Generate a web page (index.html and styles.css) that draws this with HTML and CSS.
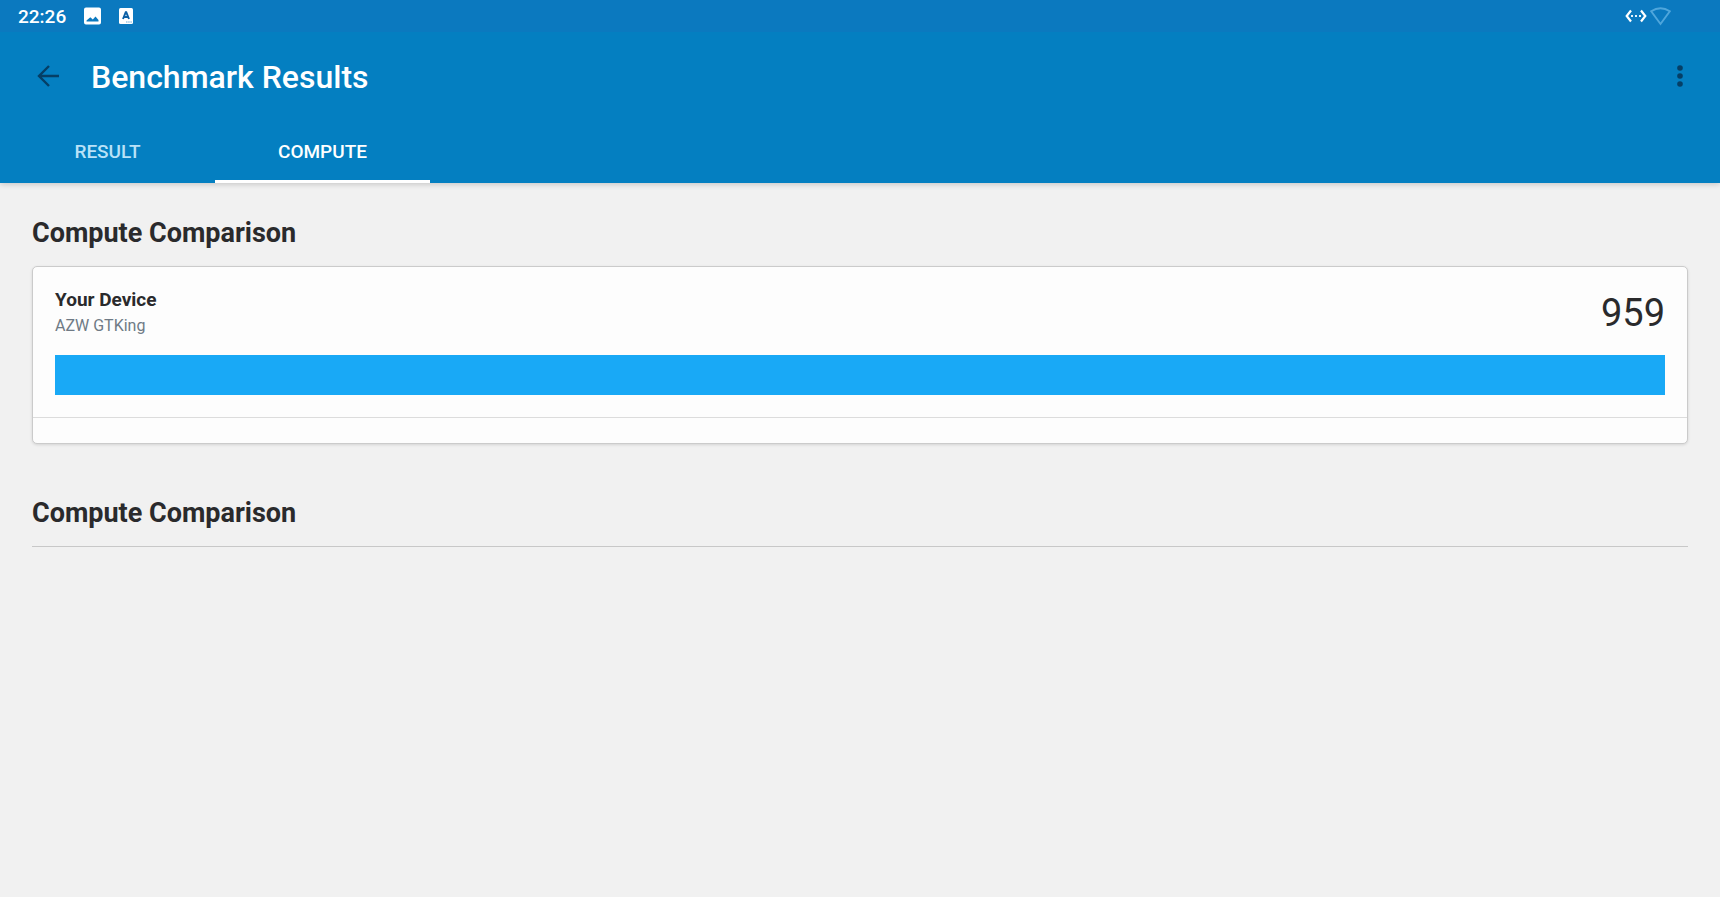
FILE: index.html
```html
<!DOCTYPE html>
<html lang="en">
<head>
  <meta charset="UTF-8" />
  <meta name="viewport" content="width=device-width, initial-scale=1" />
  <title>Benchmark Results</title>
  <link rel="stylesheet" href="styles.css">
</head>
<body>

  <header class="app-header">
    <div class="status-bar">
      <span class="clock">22:26</span>
      <svg class="status-picture" width="17" height="18" viewBox="0 0 17 18">
        <path fill="#fff" fill-rule="evenodd" d="M2 .5h13a2 2 0 0 1 2 2v13a2 2 0 0 1-2 2H2a2 2 0 0 1-2-2v-13a2 2 0 0 1 2-2zM2.500 14.500h12v-1.500l-3-3.500-2.700 3-2.500-2.300-3.800 3.300z"/>
      </svg>
      <svg class="status-keyboard" width="15" height="16" viewBox="0 0 15 16">
        <rect width="14" height="16" rx="1.500" fill="#fff"/>
        <path d="M4 11 6.700 4.300h.6L10 11M5.200 9h3.800" fill="none" stroke="#0b5fa5" stroke-width="1.900"/>
        <path d="M7 14h6" stroke="#6aa9d8" stroke-width="1.200" stroke-dasharray="1.500 .7"/>
      </svg>
      <div class="status-right">
        <svg width="22" height="14" viewBox="0 0 22 14">
          <path d="M6 1.500 1.700 7 6 12.500M16 1.500 20.300 7 16 12.500" fill="none" stroke="#fff" stroke-width="2.200"/>
          <path d="M6 6h2v2H6zM10 6h2v2h-2zM14 6h2v2h-2z" fill="#e3f3fc"/>
        </svg>
        <svg width="21" height="19" viewBox="0 0 21 19">
          <path d="M1.200 4.200Q10.500-1.800 19.800 4.200L10.500 17z" fill="none" stroke="#4fa6dc" stroke-width="1.900"/>
        </svg>
      </div>
    </div>

    <div class="toolbar">
      <button class="icon-button" aria-label="Back">
        <svg width="22" height="22" viewBox="0 0 22 22">
          <path d="M12 1 2 11l10 10M2 11h20" fill="none" stroke="#053f66" stroke-width="2.400"/>
        </svg>
      </button>
      <h1>Benchmark Results</h1>
      <button class="icon-button more" aria-label="More options">
        <svg width="6" height="22" viewBox="0 0 6 22">
          <g fill="#053f66">
            <circle cx="3" cy="3" r="2.800"/>
            <circle cx="3" cy="11" r="2.800"/>
            <circle cx="3" cy="19" r="2.800"/>
          </g>
        </svg>
      </button>
    </div>

    <nav class="tabs" role="tablist">
      <button class="tab" role="tab" aria-selected="false">RESULT</button>
      <button class="tab active" role="tab" aria-selected="true">COMPUTE</button>
    </nav>
  </header>

  <main>
    <section>
      <h2>Compute Comparison</h2>
      <div class="card">
        <div class="entry">
          <div class="entry-head">
            <div>
              <div class="device">Your Device</div>
              <div class="model">AZW GTKing</div>
            </div>
            <div class="score">959</div>
          </div>
          <div class="bar"></div>
        </div>
      </div>
    </section>

    <section>
      <h2>Compute Comparison</h2>
      <div class="empty-list"></div>
    </section>
  </main>

</body>
</html>
```
FILE: styles.css
```css
* {
  box-sizing: border-box;
}
body {
  font-family: Roboto, sans-serif;
  background-color: #f1f1f1;
  color: #2a2a2c;
  margin: 0;
}
h1, h2 {
  margin: 0;
}
svg {
  display: block;
}
button {
  font-family: inherit;
  background: none;
  border: none;
  padding: 0;
  cursor: pointer;
}
.app-header {
  background-color: #047fc1;
  box-shadow: 0 1px 6px rgba(0,0,0,0.2);
}
.status-bar {
  display: flex;
  align-items: center;
  height: 32px;
  padding: 0 49px 0 18px;
  background-color: #0b79bf;
  color: white;
}
.clock {
  font-size: 19px;
  font-weight: 500;
  line-height: 32px;
  padding-top: 2px;
}
.status-picture {
  margin-left: 18px;
}
.status-keyboard {
  margin-left: 18px;
}
.status-right {
  display: flex;
  align-items: center;
  gap: 3px;
  margin-left: auto;
}
.toolbar {
  display: flex;
  align-items: center;
  height: 88px;
  padding: 0 29px 0 27px;
}
.toolbar h1 {
  margin-left: 22px;
  padding-top: 2px;
  font-size: 32px;
  font-weight: 500;
  line-height: 40px;
  color: white;
}
.icon-button {
  display: flex;
  align-items: center;
  justify-content: center;
  width: 42px;
  height: 42px;
}
.more {
  width: 22px;
  margin-left: auto;
}
.tabs {
  display: flex;
}
.tab {
  width: 215px;
  height: 63px;
  border-top: 3px solid transparent;
  border-bottom: 3px solid transparent;
  font-size: 19px;
  font-weight: 500;
  color: #b9e2f8;
}
.tab.active {
  color: white;
  border-bottom-color: white;
}
main {
  padding: 32px;
}
section {
  margin-bottom: 51px;
}
h2 {
  margin-bottom: 15px;
  font-size: 27px;
  font-weight: 700;
  line-height: 36px;
}
.card {
  background-color: #fdfdfd;
  border: 1px solid #cbcbcb;
  border-radius: 5px;
  box-shadow: 0 1px 3px rgba(0,0,0,0.12);
  padding-bottom: 25px;
}
.entry {
  padding: 20px 22px 22px;
  border-bottom: 1px solid #dcdcdc;
}
.entry-head {
  display: flex;
  justify-content: space-between;
  align-items: center;
  margin-bottom: 16px;
}
.device {
  font-size: 19px;
  font-weight: 700;
  line-height: 26px;
}
.model {
  font-size: 16px;
  line-height: 26px;
  color: #6f7a85;
}
.score {
  font-size: 38px;
  line-height: 44px;
}
.bar {
  height: 40px;
  background-color: #19a9f6;
}
.empty-list {
  border-top: 1px solid #c8c8c8;
}
```
